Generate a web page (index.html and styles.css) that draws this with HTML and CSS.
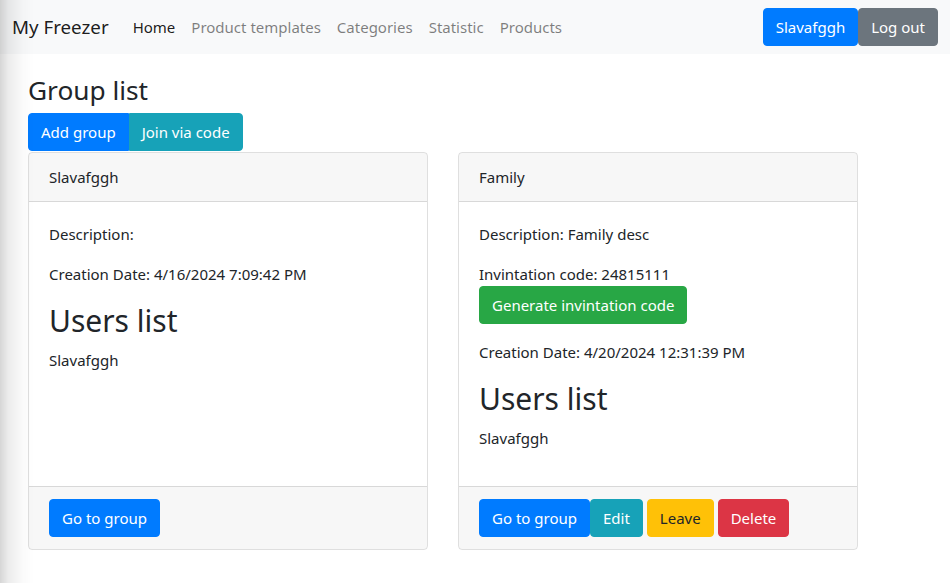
FILE: index.html
```html
<!DOCTYPE html>
<html lang="en">
<head>
<meta charset="utf-8">
<title>My Freezer</title>
<link rel="stylesheet" href="styles.css">
</head>
<body>
<nav class="navbar">
  <a class="brand" href="#">My Freezer</a>
  <ul class="nav">
    <li><a class="nav-link active" href="#">Home</a></li>
    <li><a class="nav-link" href="#">Product templates</a></li>
    <li><a class="nav-link" href="#">Categories</a></li>
    <li><a class="nav-link" href="#">Statistic</a></li>
    <li><a class="nav-link" href="#">Products</a></li>
  </ul>
  <div class="nav-right">
    <a class="btn btn-primary" href="#">Slavafggh</a><a class="btn btn-secondary" href="#">Log out</a>
  </div>
</nav>
<main class="content">
  <h3 class="page-title">Group list</h3>
  <div class="btn-group">
    <a class="btn btn-primary btn-left" href="#">Add group</a><a class="btn btn-info btn-right" href="#">Join via code</a>
  </div>
  <div class="cards">
    <div class="card">
      <div class="card-header">Slavafggh</div>
      <div class="card-body">
        <p>Description: </p>
        <p>Creation Date: 4/16/2024 7:09:42 PM</p>
        <h2 class="users-title">Users list</h2>
        <p>Slavafggh</p>
      </div>
      <div class="card-footer">
        <a class="btn btn-primary" href="#">Go to group</a>
      </div>
    </div>
    <div class="card">
      <div class="card-header">Family</div>
      <div class="card-body">
        <p>Description: Family desc</p>
        <div class="invite">
          <div>Invintation code: 24815111</div>
          <a class="btn btn-success" href="#">Generate invintation code</a>
        </div>
        <p>Creation Date: 4/20/2024 12:31:39 PM</p>
        <h2 class="users-title">Users list</h2>
        <p>Slavafggh</p>
      </div>
      <div class="card-footer">
        <a class="btn btn-primary" href="#">Go to group</a><a class="btn btn-info" href="#">Edit</a><a class="btn btn-warning gap" href="#">Leave</a><a class="btn btn-danger gap" href="#">Delete</a>
      </div>
    </div>
  </div>
</main>
<div class="edge-shadow"></div>
</body>
</html>
```
FILE: styles.css
```css
* { box-sizing: border-box; }
html, body { margin: 0; padding: 0; }
body {
  font-family: "Noto Sans", "Open Sans", sans-serif;
  font-size: 15px;
  line-height: 24px;
  color: #212529;
  background: #fff;
}
a { text-decoration: none; }

.navbar {
  display: flex;
  align-items: center;
  height: 54px;
  padding: 8px 12px;
  background: #f8f9fa;
}
.brand {
  font-size: 18.75px;
  line-height: 30px;
  color: rgba(0,0,0,.9);
  margin-right: 16px;
}
.nav {
  display: flex;
  list-style: none;
  margin: 0;
  padding: 0;
}
.nav-link {
  display: block;
  padding: 8px 8px;
  color: rgba(0,0,0,.5);
}
.nav-link.active { color: rgba(0,0,0,.9); }
.nav-right { margin-left: auto; display: flex; }

.btn {
  display: inline-block;
  padding: 6px 12px;
  font-size: 15px;
  line-height: 24px;
  border: 1px solid transparent;
  border-radius: 4px;
  color: #fff;
  white-space: nowrap;
}
.btn-primary { background: #007bff; border-color: #007bff; }
.btn-secondary { background: #6c757d; border-color: #6c757d; }
.btn-info { background: #17a2b8; border-color: #17a2b8; }
.btn-success { background: #28a745; border-color: #28a745; }
.btn-warning { background: #ffc107; border-color: #ffc107; color: #212529; }
.btn-danger { background: #dc3545; border-color: #dc3545; }
.gap { margin-left: 4px; }

.content { padding: 20px 28px 0; }
.page-title {
  margin: 0 0 6px;
  font-size: 26.25px;
  line-height: 33px;
  font-weight: 400;
}
.btn-group { display: flex; }
.btn-left { border-top-right-radius: 0; border-bottom-right-radius: 0; }
.btn-right { border-top-left-radius: 0; border-bottom-left-radius: 0; }

.cards {
  display: flex;
  gap: 30px;
  margin-top: 1px;
  align-items: stretch;
}
.card {
  width: 400px;
  display: flex;
  flex-direction: column;
  border: 1px solid rgba(0,0,0,.125);
  border-radius: 4px;
  overflow: hidden;
}
.card-header {
  padding: 12px 20px;
  background: rgba(0,0,0,.03);
  border-bottom: 1px solid rgba(0,0,0,.125);
}
.card-body {
  flex: 1;
  padding: 20px;
}
.card-body p { margin: 0 0 16px; }
.invite { margin-bottom: 16px; }
.users-title {
  margin: 0 0 8px;
  font-size: 30px;
  line-height: 38.4px;
  font-weight: 400;
}
.card-footer {
  display: flex;
  padding: 12px 20px;
  background: rgba(0,0,0,.03);
  border-top: 1px solid rgba(0,0,0,.125);
}

.edge-shadow {
  position: fixed;
  left: 0;
  top: 0;
  bottom: 0;
  width: 34px;
  pointer-events: none;
  background: linear-gradient(to right, rgba(0,0,0,.16), rgba(0,0,0,.08) 8px, rgba(0,0,0,.02) 22px, rgba(0,0,0,0) 34px);
}
```
